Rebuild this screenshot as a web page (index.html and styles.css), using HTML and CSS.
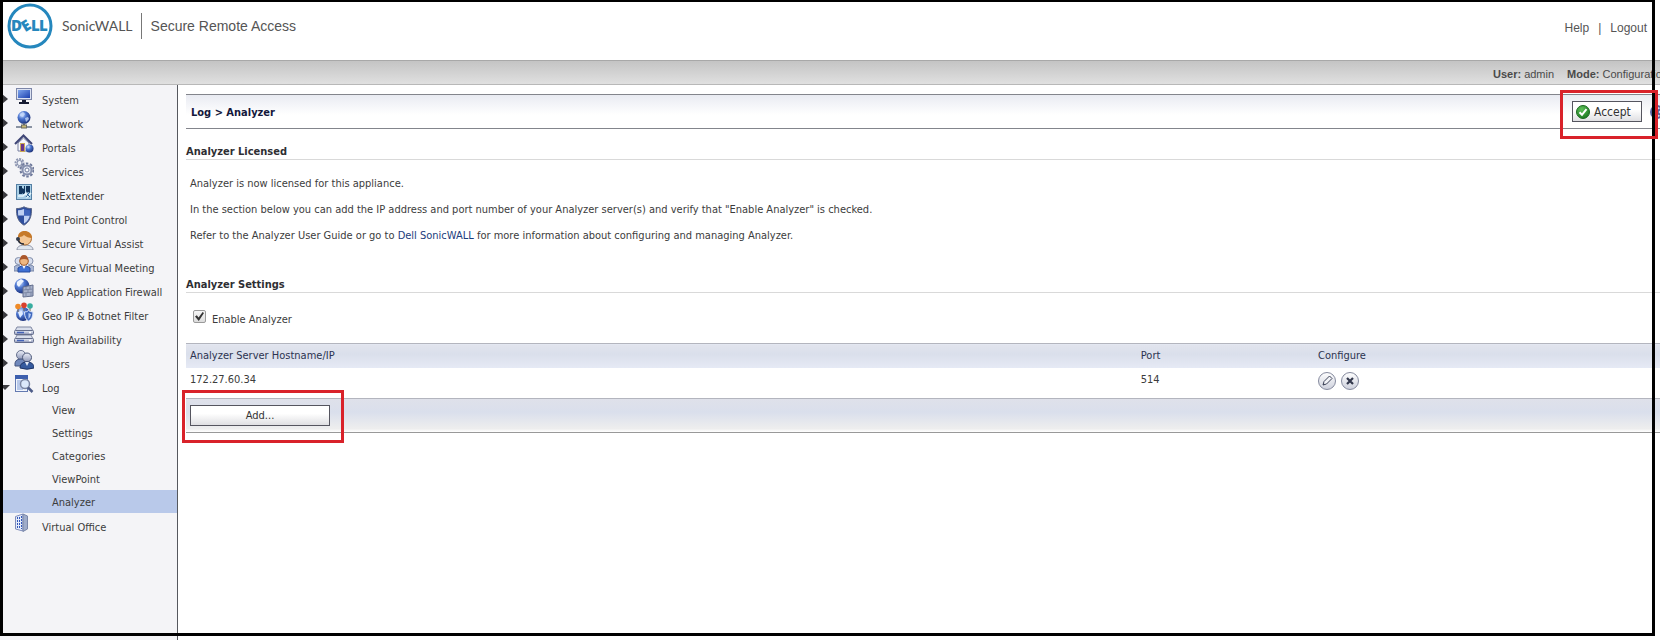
FILE: index.html
```html
<!DOCTYPE html>
<html lang="en">
<head>
  <meta charset="utf-8">
  <title>Dell SonicWALL - Secure Remote Access</title>
  <link rel="stylesheet" href="styles.css">
</head>
<body>
  <svg class="defs" width="0" height="0" aria-hidden="true">
    <defs>
      <linearGradient id="blue" x1="0" y1="0" x2="1" y2="1">
        <stop offset="0" stop-color="#7fa6ee"/>
        <stop offset="1" stop-color="#1b3fae"/>
      </linearGradient>
      <radialGradient id="globe" cx="0.35" cy="0.3" r="0.8">
        <stop offset="0" stop-color="#d5e4ff"/>
        <stop offset="0.4" stop-color="#4a74cf"/>
        <stop offset="1" stop-color="#14256b"/>
      </radialGradient>
      <linearGradient id="steel" x1="0" y1="0" x2="0" y2="1">
        <stop offset="0" stop-color="#eef1fa"/>
        <stop offset="1" stop-color="#8b94b5"/>
      </linearGradient>
      <radialGradient id="green" cx="0.4" cy="0.3" r="0.8">
        <stop offset="0" stop-color="#5fc25a"/>
        <stop offset="1" stop-color="#14701b"/>
      </radialGradient>
      <linearGradient id="round" x1="0" y1="0" x2="0" y2="1">
        <stop offset="0" stop-color="#ffffff"/>
        <stop offset="1" stop-color="#cdd0dc"/>
      </linearGradient>
    </defs>
  </svg>

  <div class="page">
    <header class="header">
      <div class="brand">
        <svg class="logo" viewBox="0 0 46 46" width="46" height="46" role="img" aria-label="Dell">
          <circle cx="23" cy="23" r="21" fill="#fff" stroke="#2587bd" stroke-width="3"/>
          <g class="logo-text">
            <text x="4" y="28">D</text>
            <text x="15" y="28" transform="rotate(-32 19 23)">E</text>
            <text x="24" y="28">L</text>
            <text x="32" y="28">L</text>
          </g>
        </svg>
        <span class="brand-name">SonicWALL</span>
        <span class="product">Secure Remote Access</span>
      </div>
      <nav class="top-links">
        <a href="#">Help</a>
        <span>|</span>
        <a href="#">Logout</a>
      </nav>
    </header>

    <div class="status-bar">
      <span><b>User:</b> admin</span>
      <span><b>Mode:</b> Configuration</span>
    </div>

    <div class="body">
      <nav class="sidebar">
        <ul class="menu">
          <li class="closed">
            <svg class="icon" viewBox="0 0 20 20"><rect x="2.500" y="2.500" width="15" height="11" fill="#dde3f2" stroke="#7c86a8"/><rect x="4" y="4" width="12" height="8" fill="url(#blue)"/><path d="M8 14h4v2h3v2H5v-2h3z" fill="#171c33"/></svg>
            <a href="#">System</a>
          </li>
          <li class="closed">
            <svg class="icon" viewBox="0 0 20 20"><circle cx="10" cy="7.500" r="6.500" fill="url(#globe)"/><path d="M6 4l3-2 2 2-2 3-3-1zM11 8l3-1 1 2-3 3z" fill="#c4d8fb" opacity=".8"/><path d="M2 17h16" stroke="#8a93a3" stroke-width="2"/><path d="M10 13v3" stroke="#596785" stroke-width="2"/><rect x="7.500" y="15" width="5" height="3" fill="#c6b875" stroke="#6b6b63"/></svg>
            <a href="#">Network</a>
          </li>
          <li class="closed">
            <svg class="icon" viewBox="0 0 20 20"><path d="M4 9v8h11V9L9.500 4z" fill="#f7f8fc" stroke="#777ea0"/><path d="M1 10l8.500-8.500L18 10" fill="none" stroke="#3e4576" stroke-width="2"/><rect x="6.500" y="9.500" width="4" height="8" fill="#68358b" stroke="#caa956"/><circle cx="15.500" cy="14.500" r="4" fill="url(#globe)"/></svg>
            <a href="#">Portals</a>
          </li>
          <li class="closed">
            <svg class="icon" viewBox="0 0 20 20"><circle cx="5.500" cy="5" r="4" fill="none" stroke="#8b94b0" stroke-width="2" stroke-dasharray="2 1"/><circle cx="5.500" cy="5" r="2.500" fill="#eef1f8" stroke="#7d87a6"/><circle cx="13" cy="12" r="6.500" fill="none" stroke="#6f7a9c" stroke-width="2" stroke-dasharray="2.500 1.600"/><circle cx="13" cy="12" r="4.500" fill="#e3e8f4" stroke="#8790ae" stroke-width="2"/><circle cx="13" cy="12" r="2" fill="#fff" stroke="#6f7a9c"/></svg>
            <a href="#">Services</a>
          </li>
          <li class="closed">
            <svg class="icon" viewBox="0 0 20 20"><rect x="2.500" y="2.500" width="15" height="15" fill="#a9cfe6" stroke="#547fa4"/><path d="M5 4h3v2l2 1V4h1v8H9l-1-1v1H5z" fill="#12365e"/><path d="M12 4h4v7l-2-1-2 2z" fill="#12365e"/><path d="M4 14h5l3-3 1 4 4-4" fill="none" stroke="#e6f5fd" stroke-width="1.500"/><path d="M12 15l3-4M13 12l3 3" stroke="#2d6393"/></svg>
            <a href="#">NetExtender</a>
          </li>
          <li class="closed">
            <svg class="icon" viewBox="0 0 20 20"><path d="M10 .8c2.500 1.400 5 1.800 7.500 1.700.3 7-1.200 13-7.500 16.700C3.700 15.500 2.200 9.500 2.500 2.500 5 2.600 7.500 2.200 10 .8z" fill="#2e4e9e" stroke="#5b6788"/><path d="M10 3v6.500H4.200C4 7.500 4 6 4 4.200 6 4.200 8 3.800 10 3zM10 9.500h5.800c-.6 3.500-2.400 6-5.800 8z" fill="#bfd0f2"/><path d="M10 3c2 .8 4 1.200 6 1.200 0 1.800 0 3.300-.2 5.300H10z" fill="#4166bd"/></svg>
            <a href="#">End Point Control</a>
          </li>
          <li class="closed">
            <svg class="icon" viewBox="0 0 20 20"><path d="M3 20c0-4 4-5 8-5s8 1 8 5z" fill="#dfe5ee" stroke="#8a91a3"/><circle cx="11" cy="8.500" r="6.500" fill="#f3c695" stroke="#ae6c2e"/><path d="M4 7c0-8 14-8 14 1-3 0-6-1-8-3-2 2-4 2-6 2z" fill="#c67929"/><path d="M4 8c0 4 2 6 6 6" fill="none" stroke="#222835" stroke-width="1.500"/><circle cx="4" cy="9" r="2" fill="#323a4c"/></svg>
            <a href="#">Secure Virtual Assist</a>
          </li>
          <li class="closed">
            <svg class="icon" viewBox="0 0 20 20"><circle cx="4.500" cy="7" r="3.500" fill="#d7deee" stroke="#8490ad"/><circle cx="15.500" cy="7" r="3.500" fill="#d7deee" stroke="#8490ad"/><path d="M0 17v-4q4-4 7 0v4zM13 17v-4q4-4 7 0v4z" fill="#a7b5d4" stroke="#7886a7"/><path d="M4 18v-4q6-5 12 0v4z" fill="#3e70d4" stroke="#274a9d"/><path d="M8 11h4l-2 4z" fill="#fff"/><circle cx="10" cy="7" r="4.300" fill="#edb782" stroke="#9d5527"/><path d="M6 6q0-5 4-5t4 5q-4-2-8 0z" fill="#aa572b"/></svg>
            <a href="#">Secure Virtual Meeting</a>
          </li>
          <li class="closed">
            <svg class="icon" viewBox="0 0 20 20"><circle cx="8" cy="8" r="7.500" fill="url(#globe)"/><path d="M3 4l4-3 3 2-3 3-2 3-2-2z" fill="#edf4ff"/><path d="M9 9l10-2v11l-10 1z" fill="#a8b2cb" stroke="#626d8c"/><path d="M9 12l10-1M9 15l10-1M12 9v3M16 8v3M14 12v3M12 15v4M17 14v4" stroke="#7c87a4" fill="none"/></svg>
            <a href="#">Web Application Firewall</a>
          </li>
          <li class="closed">
            <svg class="icon" viewBox="0 0 20 20"><circle cx="9" cy="12" r="7" fill="url(#globe)"/><path d="M4 10l4-1 1 3-3 4z" fill="#e0ecff"/><path d="M4 5v5M10 4v5M16 5v5" stroke="#6a5a4a"/><circle cx="4" cy="4.500" r="2.800" fill="#ef8a27"/><circle cx="10" cy="3.200" r="2.800" fill="#d9402c"/><circle cx="16" cy="4" r="2.800" fill="#37ada0"/><path d="M10.500 10q2.500 0 4-1.500 2 1.500 4.500 1.500 0 7-4.500 9-4-2-4-9z" fill="#3e67bd" stroke="#dbe5fa"/><path d="M14.500 11v6q2-2 2.500-5z" fill="#b7cdf4"/></svg>
            <a href="#">Geo IP &amp; Botnet Filter</a>
          </li>
          <li class="closed">
            <svg class="icon" viewBox="0 0 20 20"><path d="M3 1h14l2 4H1zM3 9h14l2 4H1z" fill="#d9deeb" stroke="#8088a3"/><rect x=".5" y="4.500" width="19" height="4" rx="1" fill="url(#steel)" stroke="#656e8c"/><rect x=".5" y="12.500" width="19" height="4" rx="1" fill="url(#steel)" stroke="#656e8c"/><path d="M3 6.500h7M3 14.500h7" stroke="#4463b8" stroke-width="1.500"/><path d="M15 6.500h2M15 14.500h2" stroke="#fff" stroke-width="1.500"/></svg>
            <a href="#">High Availability</a>
          </li>
          <li class="closed">
            <svg class="icon" viewBox="0 0 20 20"><circle cx="7" cy="5" r="4.500" fill="url(#steel)" stroke="#68728f"/><path d="M1 16q-1-7 6-7t6 7z" fill="#7189bc" stroke="#45557f"/><circle cx="13" cy="7.500" r="4.500" fill="url(#steel)" stroke="#4c5879"/><path d="M6 18q0-6 7-6t7 6q-7 2.500-14 0z" fill="#355a9e" stroke="#1e3467"/><path d="M11 12l2 4 2-4z" fill="#e5ecf8"/></svg>
            <a href="#">Users</a>
          </li>
          <li class="open">
            <svg class="icon" viewBox="0 0 20 20"><rect x="1.500" y="1.500" width="12" height="16" fill="#f1f5fd" stroke="#647ab1"/><path d="M1 1h13v4H1z" fill="#3d5fae"/><path d="M3 7h4M3 9h3M3 11h3M3 13h4M3 15h6" stroke="#7f9bd5"/><circle cx="11" cy="10" r="4.500" fill="#dbe8fb" stroke="#7b86a3" stroke-width="1.500"/><path d="M14 13.500l4.500 4.500" stroke="#4d5c88" stroke-width="2.500"/></svg>
            <a href="#">Log</a>
          </li>
        </ul>
        <ul class="submenu">
          <li><a href="#">View</a></li>
          <li><a href="#">Settings</a></li>
          <li><a href="#">Categories</a></li>
          <li><a href="#">ViewPoint</a></li>
          <li class="active"><a href="#">Analyzer</a></li>
        </ul>
        <ul class="menu">
          <li>
            <svg class="icon" viewBox="0 0 20 20"><path d="M1.500 3.500L9 1v17l-7.500-2z" fill="#e4ebfb" stroke="#7f8dbb"/><path d="M9 1l4.500 2v13L9 18.500z" fill="#9facca" stroke="#7986a8"/><path d="M3.500 4v11M5.500 4v12M7.500 3v13" stroke="#3156ba" stroke-dasharray="2 1"/></svg>
            <a href="#">Virtual Office</a>
          </li>
        </ul>
      </nav>

      <main class="content">
        <div class="title-bar">
          <h1>Log &gt; Analyzer</h1>
          <div class="actions">
            <div class="marked marked-accept">
              <button class="button accept" type="button">
                <svg viewBox="0 0 14 14" width="14" height="14"><circle cx="7" cy="7" r="6.500" fill="url(#green)" stroke="#1b6a20"/><path d="M3.500 7.200l2.500 2.600 4.500-5.600" fill="none" stroke="#fff" stroke-width="2"/></svg>
                Accept
              </button>
            </div>
            <button class="cancel" type="button" aria-label="Cancel">
              <svg viewBox="0 0 14 14" width="14" height="14"><circle cx="7" cy="7" r="6" fill="#dfe5f5" stroke="#5564a0" stroke-width="2"/><path d="M4 4l6 6M10 4l-6 6" stroke="#5564a0" stroke-width="2"/></svg>
            </button>
          </div>
        </div>

        <section class="licensed">
          <h2>Analyzer Licensed</h2>
          <p>Analyzer is now licensed for this appliance.</p>
          <p>In the section below you can add the IP address and port number of your Analyzer server(s) and verify that "Enable Analyzer" is checked.</p>
          <p>Refer to the Analyzer User Guide or go to <a href="#">Dell SonicWALL</a> for more information about configuring and managing Analyzer.</p>
        </section>

        <section>
          <h2>Analyzer Settings</h2>
          <div class="enable">
            <input type="checkbox" id="enable-analyzer" checked>
            <label for="enable-analyzer">Enable Analyzer</label>
          </div>

          <table class="servers">
            <thead>
              <tr>
                <th class="col-host">Analyzer Server Hostname/IP</th>
                <th class="col-port">Port</th>
                <th>Configure</th>
              </tr>
            </thead>
            <tbody>
              <tr>
                <td>172.27.60.34</td>
                <td>514</td>
                <td>
                  <div class="row-tools">
                    <button class="tool" type="button" aria-label="Edit">
                      <svg viewBox="0 0 18 18" width="18" height="18"><circle cx="9" cy="9" r="8.500" fill="url(#round)" stroke="#858a9e"/><path d="M5 13l1-3.500 5.500-5.500 2.500 2.500L8.500 12z" fill="#f3f4f8" stroke="#3d4358"/><path d="M5 13l.6-2 1.400 1.400z" fill="#3d4358"/></svg>
                    </button>
                    <button class="tool" type="button" aria-label="Delete">
                      <svg viewBox="0 0 18 18" width="18" height="18"><circle cx="9" cy="9" r="8.500" fill="url(#round)" stroke="#858a9e"/><path d="M6 6l6 6M12 6l-6 6" stroke="#33384c" stroke-width="2.200"/></svg>
                    </button>
                  </div>
                </td>
              </tr>
            </tbody>
          </table>
          <div class="table-footer">
            <div class="marked marked-add">
              <button class="button add" type="button">Add...</button>
            </div>
          </div>
        </section>
      </main>
    </div>
  </div>

  <div class="frame"></div>
</body>
</html>
```
FILE: styles.css
```css
* {
  box-sizing: border-box;
}

body {
  margin: 0;
  min-height: 100vh;
  overflow: hidden;
  background: #fff;
  color: #3c3c3c;
  font-family: "DejaVu Sans Condensed", Tahoma, sans-serif;
  font-size: 11px;
}

a {
  color: inherit;
  text-decoration: none;
}

ul {
  list-style: none;
  margin: 0;
  padding: 0;
}

button {
  font-family: inherit;
  font-size: 11px;
  cursor: pointer;
}

.defs {
  position: absolute;
}

/* the console runs a little past the right edge of the window */
.page {
  display: flex;
  flex-direction: column;
  min-height: 100vh;
  margin-right: -28px;
}

.header {
  display: flex;
  justify-content: space-between;
  align-items: flex-start;
  height: 60px;
  padding: 3px 41px 0 7px;
  font-family: "Liberation Sans", Arial, sans-serif;
  color: #555;
}

.brand {
  display: flex;
  align-items: center;
}

.logo-text {
  fill: #2587bd;
  font-family: "Open Sans", sans-serif;
  font-size: 15px;
  font-weight: 800;
}

.brand-name {
  margin-left: 9px;
  padding-right: 8px;
  border-right: 1px solid #777;
  font-family: Lato, sans-serif;
  font-size: 14px;
  line-height: 26px;
}

.product {
  margin-left: 9px;
  font-size: 14px;
}

.top-links {
  display: flex;
  gap: 9px;
  padding-top: 16px;
  font-size: 12px;
  line-height: 18px;
}

.status-bar {
  display: flex;
  justify-content: flex-end;
  gap: 13px;
  height: 25px;
  padding-right: 20px;
  border-top: 1px solid #a8a8a8;
  border-bottom: 1px solid #b8b8b8;
  background: linear-gradient(#c4c4c4, #e0e0e0);
  color: #4a4a4a;
  font-family: "Liberation Sans", Arial, sans-serif;
  line-height: 27px;
}

.body {
  display: flex;
  flex: 1;
}

.sidebar {
  flex: none;
  width: 178px;
  padding-top: 1px;
  border-right: 1px solid #55585e;
  background: #f4f4f7;
}

.menu li {
  display: flex;
  gap: 8px;
  height: 24px;
  padding-left: 14px;
}

.menu .closed,
.menu .open {
  padding-left: 0;
}

.menu .closed::before,
.menu .open::before {
  content: "";
  width: 10px;
  height: 10px;
  margin: 8px -4px 0 0;
  background: #3b3b40;
  clip-path: polygon(20% 0, 80% 50%, 20% 100%);
}

.menu .open::before {
  clip-path: polygon(0 30%, 100% 30%, 50% 80%);
}

.menu a {
  padding-top: 4px;
  line-height: 22px;
}

.icon {
  flex: none;
  width: 20px;
  height: 20px;
}

.submenu li {
  height: 23px;
  padding-left: 52px;
  line-height: 25px;
}

.submenu .active {
  background: #b9c9ea;
}

.content {
  flex: 1;
  padding: 9px 0 0 8px;
}

.title-bar {
  display: flex;
  justify-content: space-between;
  align-items: center;
  height: 35px;
  padding: 0 24px 0 5px;
  border-top: 1px solid #83858c;
  border-bottom: 1px solid #83858c;
  background: linear-gradient(#e9ebf2, #fff 60%);
}

h1 {
  margin: 0;
  padding-top: 2px;
  color: #14183c;
  font-size: 11px;
}

h2 {
  margin: 0;
  border-bottom: 1px solid #d9d9d9;
  color: #2e2e33;
  font-size: 11px;
  line-height: 14px;
}

.actions {
  display: flex;
  align-items: center;
  gap: 8px;
}

.button {
  display: flex;
  justify-content: center;
  align-items: center;
  gap: 4px;
  height: 21px;
  padding: 0 3px;
  border: 1px solid #55555f;
  background: linear-gradient(#fff 40%, #dfdfe2);
  color: #333;
}

.accept {
  justify-content: flex-start;
  width: 70px;
  font-size: 12px;
}

.add {
  width: 140px;
}

.cancel {
  display: flex;
  padding: 0;
  border: 0;
  background: none;
}

/* red outlines round the two buttons to press */
.marked {
  position: relative;
}

.marked::after {
  content: "";
  position: absolute;
  z-index: 2;
  border: 3px solid #d9222a;
  pointer-events: none;
}

.marked-accept::after {
  inset: -11px -16px -17px -12px;
}

.marked-add::after {
  inset: -15px -14px -17px -8px;
}

.licensed {
  margin-bottom: 18px;
}

section {
  padding-top: 16px;
}

p {
  margin: 0 0 10px;
  padding-left: 4px;
  line-height: 16px;
}

h2 + p {
  margin-top: 16px;
}

p a {
  color: #1b3c7c;
}

.enable {
  display: flex;
  gap: 6px;
  height: 50px;
  padding: 17px 0 0 7px;
}

.enable label {
  line-height: 20px;
}

.enable input {
  appearance: none;
  width: 13px;
  height: 13px;
  margin: 0;
  border: 1px solid #9a9a9a;
  border-radius: 2px;
  background: linear-gradient(#f6f6f6, #dcdcdc);
}

.enable input:checked::before {
  content: "";
  display: block;
  width: 9px;
  height: 9px;
  margin: 1px;
  background: #333;
  clip-path: polygon(0 50%, 20% 35%, 40% 60%, 85% 0, 100% 12%, 42% 100%);
}

.servers {
  width: 100%;
  border-collapse: collapse;
  table-layout: fixed;
}

.servers th {
  height: 24px;
  padding: 0 4px;
  border-top: 1px solid #b3b5be;
  background: linear-gradient(#e1e4ed, #dadfeb 40%, #e6eaf5);
  color: #2c3350;
  font-weight: normal;
  text-align: left;
}

.servers td {
  height: 30px;
  padding: 3px 4px 0;
  line-height: 17px;
  vertical-align: top;
}

.col-host {
  width: 63.3%;
}

.col-port {
  width: 11.8%;
}

.row-tools {
  display: flex;
  gap: 5px;
  padding-top: 1px;
}

.tool {
  width: 18px;
  height: 18px;
  padding: 0;
  border: 0;
  background: none;
}

.tool svg {
  display: block;
}

.table-footer {
  display: flex;
  align-items: flex-start;
  height: 35px;
  padding: 6px 4px 0;
  border-top: 1px solid #b3b5be;
  border-bottom: 1px solid #999;
  background: linear-gradient(#dfe1ea, #dadfec 40%, #eee 90%, #fff);
}

.frame {
  position: fixed;
  z-index: 1;
  inset: 0 5px 4px 0;
  border: 3px solid #000;
  border-top-width: 2px;
  pointer-events: none;
}
```
